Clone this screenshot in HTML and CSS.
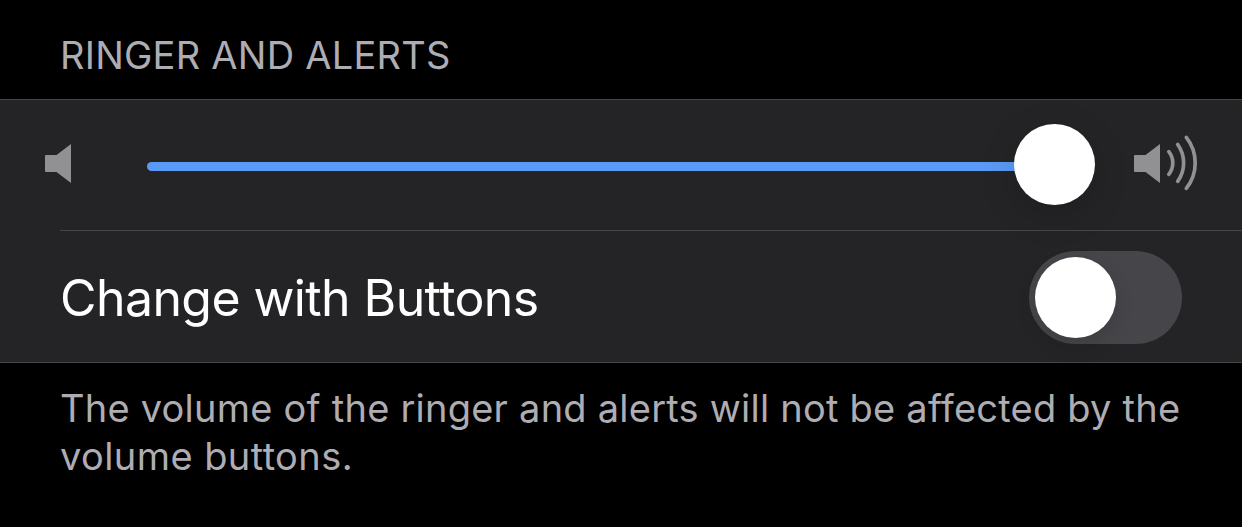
FILE: index.html
```html
<!DOCTYPE html>
<html lang="en">
<head>
    <meta charset="UTF-8">
    <meta name="viewport" content="width=device-width, initial-scale=1.0">
    <title>Sounds</title>
    <link rel="stylesheet" href="styles.css">
</head>
<body>
    <h2 class="section-title">RINGER AND ALERTS</h2>
    <div class="group">
        <div class="volume-row">
            <svg class="icon-low" width="28" height="40" viewBox="0 0 28 40">
                <path d="M2 11H12.500L27 0V39L12.500 28H2Q1 28 1 27V12Q1 11 2 11Z" fill="#919193"/>
            </svg>
            <div class="slider">
                <div class="track"></div>
                <div class="thumb"></div>
            </div>
            <svg class="icon-high" width="68" height="60" viewBox="0 0 68 60">
                <path d="M2 21H12.500L27 10V49L12.500 38H2Q1 38 1 37V22Q1 21 2 21Z" fill="#919193"/>
                <path d="M35.800 17.700A18 18 0 0 1 35.800 40.300M44.700 10.500A31.500 31.500 0 0 1 44.700 47.300M53.300 3.400A41 41 0 0 1 53.300 54.400" fill="none" stroke="#919193" stroke-width="3.700" stroke-linecap="round"/>
            </svg>
        </div>
        <div class="switch-row">
            <span class="label">Change with Buttons</span>
            <div class="switch"><div class="knob"></div></div>
        </div>
    </div>
    <p class="note">The volume of the ringer and alerts will not be affected by the<br><span class="last-line">volume buttons.</span></p>
</body>
</html>
```

FILE: styles.css
```css
* {
    box-sizing: border-box;
}

body {
    margin: 0;
    height: 527px;
    overflow: hidden;
    background-color: #000;
    font-family: Inter, sans-serif;
}

.section-title {
    height: 99px;
    margin: 0;
    padding: 31px 60px 0;
    font-size: 38px;
    font-weight: 400;
    line-height: 48px;
    letter-spacing: 0.24px;
    color: #aeadb3;
}

.group {
    height: 264px;
    background-color: #242426;
    border-top: 1px solid #464649;
    border-bottom: 1px solid #464649;
}

.volume-row {
    display: flex;
    height: 130px;
    padding-left: 44px;
}

.icon-low {
    margin: 44px 75px 0 0;
}

.slider {
    display: flex;
    align-items: center;
    width: 948px;
    height: 129px;
}

.track {
    width: 872px;
    height: 9px;
    margin-top: 4px;
    border-radius: 5px;
    background-color: #5a9af7;
}

.thumb {
    flex: none;
    width: 81px;
    height: 81px;
    margin-left: -5px;
    border-radius: 50%;
    background-color: #fff;
    box-shadow: 0 10px 36px rgba(0, 0, 0, 0.16);
}

.icon-high {
    flex: none;
    margin: 34px 0 0 38px;
}

.switch-row {
    display: flex;
    align-items: center;
    justify-content: space-between;
    height: 133px;
    margin-left: 60px;
    padding-right: 60px;
    border-top: 1px solid #464649;
}

.label {
    padding-top: 1px;
    font-size: 50px;
    letter-spacing: -0.59px;
    color: #fff;
}

.switch {
    width: 153px;
    height: 93px;
    padding: 6px;
    border-radius: 47px;
    background-color: #464549;
}

.knob {
    width: 81px;
    height: 81px;
    border-radius: 50%;
    background-color: #fff;
    box-shadow: 0 8px 20px rgba(0, 0, 0, 0.12);
}

.note {
    margin: 0;
    padding: 21px 60px 0;
    font-size: 38px;
    line-height: 48px;
    letter-spacing: 0.23px;
    white-space: nowrap;
    color: #aeadb3;
}

.last-line {
    letter-spacing: 0.42px;
}
```
